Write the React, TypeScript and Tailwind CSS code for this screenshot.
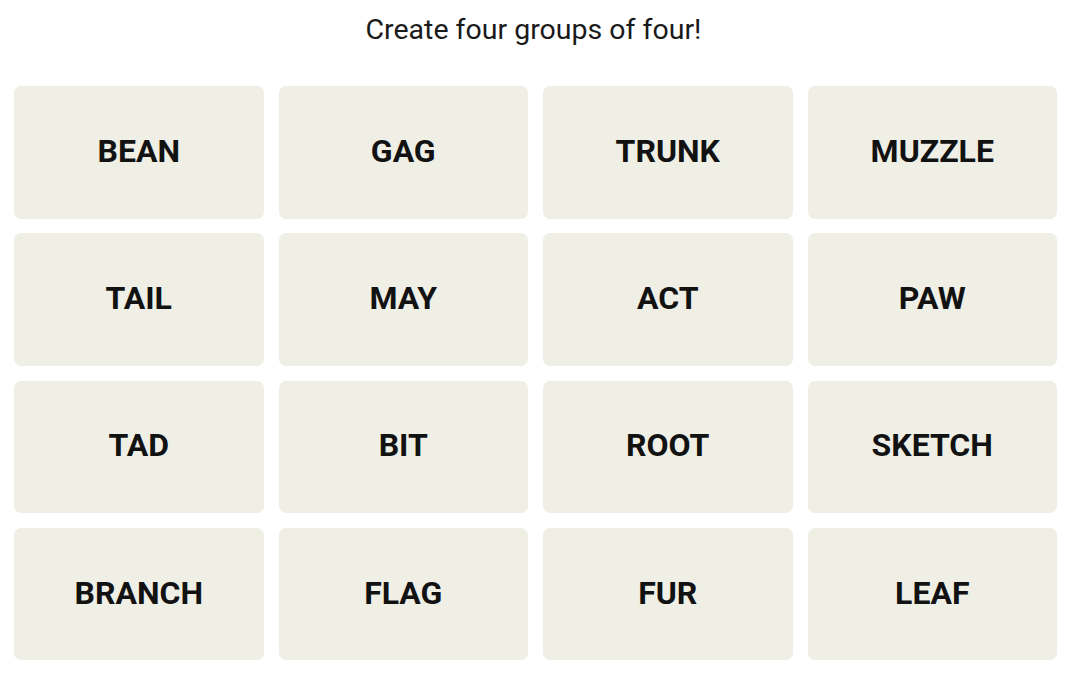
import React from "react";

const words = [
  "BEAN", "GAG", "TRUNK", "MUZZLE",
  "TAIL", "MAY", "ACT", "PAW",
  "TAD", "BIT", "ROOT", "SKETCH",
  "BRANCH", "FLAG", "FUR", "LEAF",
];

export default function App() {
  return (
    <div className="w-[1067px] h-[675px] bg-white overflow-hidden" style={{ fontFamily: "Roboto, 'Liberation Sans', sans-serif" }}>
      <div className="pt-[12px] h-[86px] text-center text-[28.5px] leading-[36px] text-[#1a1a1a]">
        Create four groups of four!
      </div>
      <div className="grid grid-cols-4 gap-x-[15px] gap-y-[14.8px] pl-[14px] pr-[10px]">
        {words.map((w) => (
          <div
            key={w}
            className="h-[132.5px] rounded-[7px] bg-[#efefe6] flex items-center justify-center pb-[3px] text-[32px] font-bold text-[#121212]"
          >
            {w}
          </div>
        ))}
      </div>
    </div>
  );
}
